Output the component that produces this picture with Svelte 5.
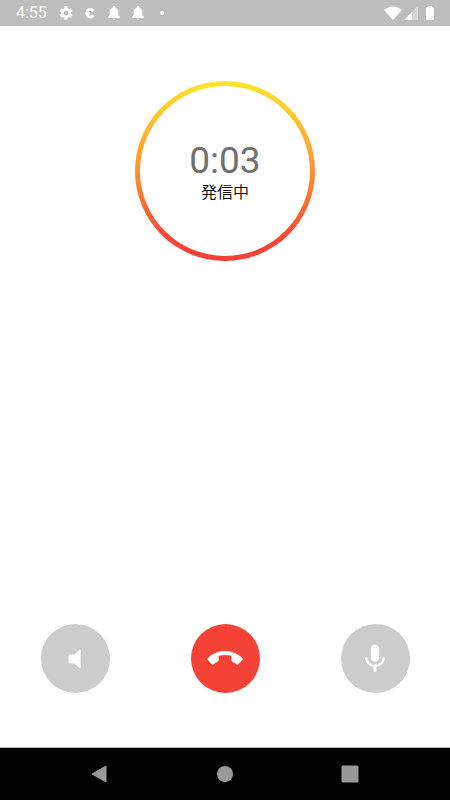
<script>
    let seconds = $state(3);
    let speaker = $state(false);
    let muted = $state(false);

    let time = $derived(Math.floor(seconds / 60) + ':' + String(seconds % 60).padStart(2, '0'));
</script>

{#snippet bell()}
    <svg class="icon" viewBox="0 0 16 16" aria-hidden="true">
        <path d="M8 1c-.7 0-1.2.5-1.2 1.1v.5C4.800 3.200 3.700 4.900 3.700 7v3.200L2 12v1h12v-1l-1.700-1.800V7c0-2.100-1.100-3.800-3.100-4.400v-.5C9.200 1.500 8.700 1 8 1zM6.600 13.700h2.800c0 .8-.6 1.300-1.400 1.300s-1.400-.5-1.400-1.300z" />
    </svg>
{/snippet}

<div class="screen">
    <header>
        <span class="clock">4:55</span>
        <svg class="icon" viewBox="0 0 24 24" aria-hidden="true">
            <path d="M19.430 12.980c.04-.32.07-.64.07-.98s-.03-.66-.07-.98l2.110-1.650c.19-.15.24-.42.12-.64l-2-3.460c-.12-.22-.39-.3-.61-.22l-2.490 1c-.52-.4-1.080-.73-1.690-.98l-.38-2.650C14.460 2.180 14.250 2 14 2h-4c-.25 0-.46.18-.49.42l-.38 2.650c-.61.25-1.170.59-1.690.98l-2.490-1c-.23-.09-.49 0-.61.22l-2 3.460c-.13.22-.07.49.12.64l2.110 1.650c-.04.32-.07.65-.07.98s.03.66.07.98l-2.110 1.650c-.19.15-.24.42-.12.64l2 3.460c.12.22.39.3.61.22l2.490-1c.52.4 1.080.73 1.690.98l.38 2.650c.03.24.24.42.49.42h4c.25 0 .46-.18.49-.42l.38-2.650c.61-.25 1.170-.59 1.690-.98l2.490 1c.23.09.49 0 .61-.22l2-3.460c.12-.22.07-.49-.12-.64l-2.110-1.650zM12 15.500c-1.930 0-3.500-1.570-3.500-3.500s1.570-3.500 3.500-3.500 3.500 1.570 3.500 3.500-1.570 3.500-3.500 3.500z" />
        </svg>
        <svg class="icon" viewBox="0 0 16 16" aria-hidden="true">
            <path d="M11.500 6 9 4.500 6 5 4.500 8.300 6 11.500 9 12.200 11.700 10.500M5 8.300h3" fill="none" stroke="#fff" stroke-width="2.700" />
        </svg>
        {@render bell()}
        {@render bell()}
        <span class="dot"></span>
        <div class="system">
            <svg class="wifi" viewBox="0 0 18 14" aria-hidden="true">
                <path d="M0 4C5-.8 13-.8 18 4L9 14z" />
            </svg>
            <svg class="signal" viewBox="0 0 14 14" aria-hidden="true">
                <path d="M14 0v14H0z" opacity=".4" />
                <path d="M8 6v8H0z" />
            </svg>
            <svg class="battery" viewBox="0 0 8 14" aria-hidden="true">
                <path d="M2 0h4v1h1l1 1v11l-1 1H1l-1-1V2l1-1h1z" />
            </svg>
        </div>
    </header>

    <main>
        <div class="ring">
            <div class="face">
                <span class="time">{time}</span>
                <span class="state">発信中</span>
            </div>
        </div>

        <div class="actions">
            <button aria-label="スピーカー" aria-pressed={speaker} onclick={() => (speaker = !speaker)}>
                <svg viewBox="0 0 36 36" aria-hidden="true">
                    <path d="M12 14h5l6-5v18l-6-5h-5z" stroke="#fff" stroke-linejoin="round" />
                </svg>
            </button>
            <button class="hangup" aria-label="終了">
                <svg viewBox="0 0 108 108" aria-hidden="true">
                    <path d="M3 50C17 37 35 30 54 30s37 7 51 20c3 3 3 5 0 8L94 70c-2 2-4 2-6 0-4-4-8-6-12-8-2-1-3-2-3-4V44c-12-3-26-3-38 0v14c0 2-1 3-3 4-4 2-8 4-12 8-2 2-4 2-6 0L3 58c-3-3-3-5 0-8z" />
                </svg>
            </button>
            <button aria-label="ミュート" aria-pressed={muted} onclick={() => (muted = !muted)}>
                <svg class="mic" viewBox="0 0 24 24" aria-hidden="true">
                    <path d="M12 14c1.660 0 2.990-1.340 2.990-3L15 5c0-1.660-1.340-3-3-3S9 3.340 9 5v6c0 1.660 1.340 3 3 3zm5.300-3c0 3-2.540 5.100-5.300 5.100S6.700 14 6.700 11H5c0 3.410 2.720 6.230 6 6.720V21h2v-3.280c3.280-.48 6-3.300 6-6.720h-1.700z" />
                </svg>
            </button>
        </div>
    </main>

    <nav>
        <button aria-label="戻る">
            <svg viewBox="0 0 18 18" aria-hidden="true"><path d="M1 9 15 1v16z" stroke="#999" stroke-linejoin="round" /></svg>
        </button>
        <button aria-label="ホーム">
            <svg viewBox="0 0 18 18" aria-hidden="true"><circle cx="9" cy="9" r="8" /></svg>
        </button>
        <button aria-label="最近のアプリ">
            <svg viewBox="0 0 18 18" aria-hidden="true"><rect x="0.500" y="0.500" width="17" height="17" rx="1.500" /></svg>
        </button>
    </nav>
</div>

<style>
    :global(body) {
        margin: 0;
        background: #fff;
    }

    .screen {
        display: flex;
        flex-direction: column;
        min-height: 100vh;
        font-family: Roboto, "Noto Sans CJK JP", sans-serif;
    }

    header {
        display: flex;
        align-items: center;
        gap: 8px;
        height: 26px;
        padding: 0 16px;
        background: #bdbdbd;
        color: #fff;
    }

    svg {
        display: block;
        fill: #fff;
    }

    .clock {
        margin-right: 3px;
        font-size: 16px;
        line-height: 28px;
    }

    .icon {
        width: 16px;
        height: 16px;
    }

    .dot {
        width: 4px;
        height: 4px;
        margin-left: 6px;
        border-radius: 50%;
        background: #fff;
    }

    .system {
        display: flex;
        align-items: center;
        margin-left: auto;
    }

    .wifi {
        width: 18px;
        height: 14px;
    }

    .signal {
        width: 14px;
        height: 14px;
        margin: 0 8px 0 2px;
    }

    .battery {
        width: 8px;
        height: 14px;
    }

    main {
        display: flex;
        flex: 1;
        flex-direction: column;
        align-items: center;
        justify-content: space-between;
        padding: 55px 0 54px;
    }

    .ring {
        width: 170px;
        height: 170px;
        padding: 5px;
        border-radius: 50%;
        background: linear-gradient(#ffe52e, #ff9130 50%, #f44336 90%);
    }

    .face {
        display: flex;
        flex-direction: column;
        align-items: center;
        justify-content: center;
        height: 100%;
        padding-top: 4px;
        border-radius: 50%;
        background: #fff;
        box-sizing: border-box;
    }

    .time {
        color: #707070;
        font-size: 37px;
        line-height: 40px;
    }

    .state {
        color: #000;
        font-size: 16px;
        font-weight: 350;
        line-height: 24px;
    }

    .actions {
        display: grid;
        grid-template-columns: repeat(3, 1fr);
        justify-items: center;
        width: 100%;
    }

    button {
        display: flex;
        align-items: center;
        justify-content: center;
        padding: 0;
        border: 0;
        background: none;
        cursor: pointer;
    }

    .actions button {
        width: 69px;
        height: 69px;
        border-radius: 50%;
        background: #ccc;
    }

    .actions svg {
        width: 36px;
        height: 36px;
    }

    .actions .mic {
        width: 34px;
        height: 34px;
    }

    .actions .hangup {
        background: #f44336;
    }

    nav {
        display: flex;
        justify-content: space-between;
        height: 53px;
        padding: 0 76px;
        background: #000;
        border-top: 1px solid #bbb;
        box-sizing: border-box;
    }

    nav button {
        width: 48px;
    }

    nav svg {
        width: 18px;
        height: 18px;
        fill: #999;
    }
</style>
